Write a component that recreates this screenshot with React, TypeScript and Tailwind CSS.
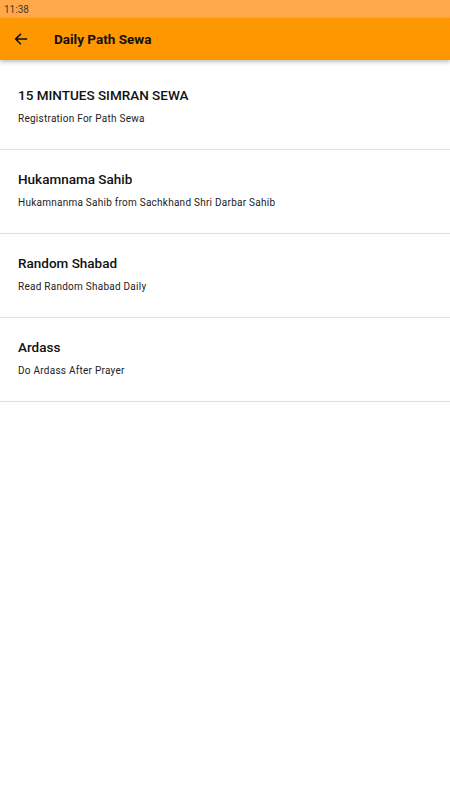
import React from "react";

const items = [
  { t: "15 MINTUES SIMRAN SEWA", s: "Registration For Path Sewa" },
  { t: "Hukamnama Sahib", s: "Hukamnanma Sahib from Sachkhand Shri Darbar Sahib" },
  { t: "Random Shabad", s: "Read Random Shabad Daily" },
  { t: "Ardass", s: "Do Ardass After Prayer" },
];

export default function App() {
  return (
    <div className="w-[450px] h-[800px] bg-white flex flex-col" style={{ fontFamily: "Roboto, 'Noto Sans', sans-serif" }}>
      <div className="h-[18px] bg-[#ffa94a] flex items-center pl-[4px] text-[10px] text-[#4a3a25]">11:38</div>
      <div className="h-[42px] bg-[#ff9800] flex items-center shadow-[0_2px_4px_rgba(0,0,0,0.25)] relative z-10">
        <div className="w-[54px] flex items-center pl-[13px]">
          <svg width="16" height="16" viewBox="0 0 24 24" fill="none" stroke="#111" strokeWidth="2.4" strokeLinecap="square">
            <path d="M20 12H5M11 5l-7 7 7 7" />
          </svg>
        </div>
        <div className="text-[13.5px] font-bold text-[#111]">Daily Path Sewa</div>
      </div>
      <div className="pt-[6px]">
        {items.map((it) => (
          <div key={it.t} className="h-[84px] border-b border-[#e0e0e0] px-[18px] flex flex-col">
            <div className="mt-[20px] text-[13.5px] font-medium text-[#111] leading-[18px]">{it.t}</div>
            <div className="mt-[8px] text-[10px] tracking-[0.25px] text-[#222] leading-[14px]">{it.s}</div>
          </div>
        ))}
      </div>
    </div>
  );
}
